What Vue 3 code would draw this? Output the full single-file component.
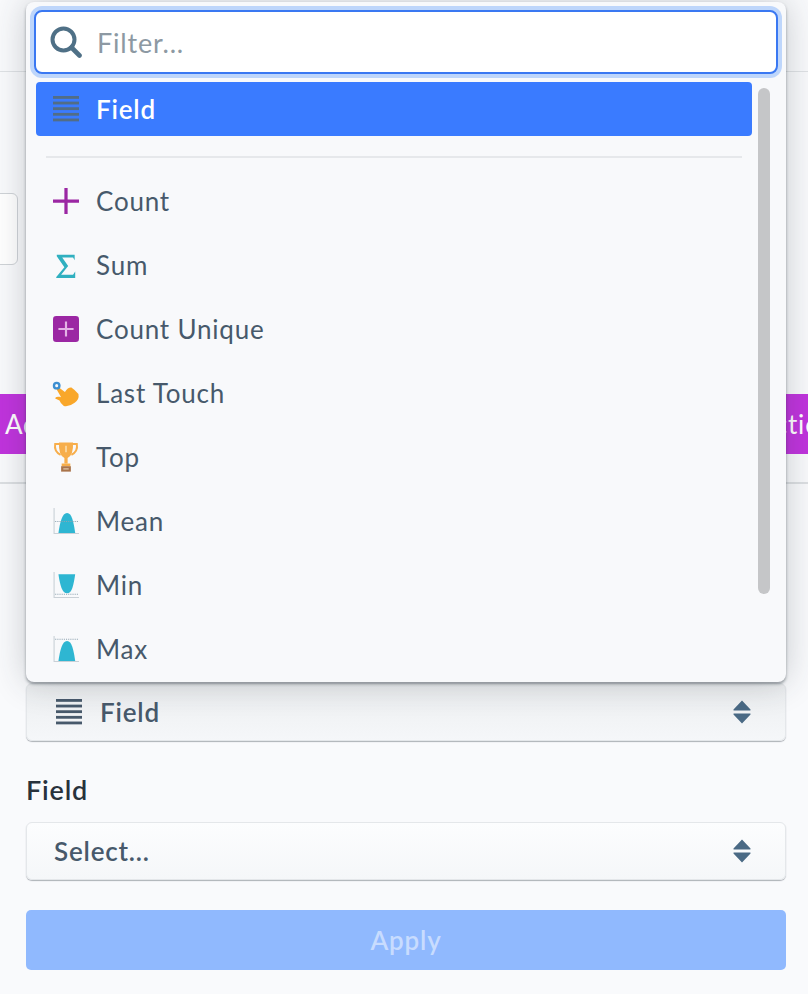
<template>
  <div class="page">
    <div class="top-bar"></div>
    <div class="name-box"></div>
    <div class="action-band">
      <span class="band-left">Add Function</span>
      <span class="band-right">Add Action</span>
    </div>
    <div class="band-line"></div>

    <div class="form">
      <button class="select select-type">
        <svg class="row-icon" viewBox="0 0 24 24">
          <rect v-for="y in barRows" :key="y" x="0" :y="y" width="24" height="2.6" fill="#47596b" />
        </svg>
        <span class="select-text">Field</span>
        <svg class="updown" viewBox="0 0 18 24">
          <path d="M9 0.5 17.5 9.5Q18 10.5 17 10.5H1Q0 10.5 .5 9.5ZM9 23.5 .5 14.5Q0 13.5 1 13.5H17Q18 13.5 17.5 14.5Z" fill="#4a6a85" />
        </svg>
      </button>

      <label class="field-label">Field</label>
      <button class="select select-field">
        <span class="select-text">Select...</span>
        <svg class="updown" viewBox="0 0 18 24">
          <path d="M9 0.5 17.5 9.5Q18 10.5 17 10.5H1Q0 10.5 .5 9.5ZM9 23.5 .5 14.5Q0 13.5 1 13.5H17Q18 13.5 17.5 14.5Z" fill="#4a6a85" />
        </svg>
      </button>

      <button class="apply">Apply</button>
    </div>

    <div class="menu">
      <div class="filter-box">
        <svg class="search-icon" viewBox="0 0 32 32">
          <circle cx="13.5" cy="13.5" r="11" fill="none" stroke="#4f7086" stroke-width="4" />
          <path d="M21.5 21.5 29.5 29.5" stroke="#4f7086" stroke-width="4.6" stroke-linecap="round" />
        </svg>
        <span class="filter-text">Filter...</span>
      </div>

      <div class="list">
        <div class="item item-active">
          <svg class="row-icon" viewBox="0 0 24 24">
            <rect v-for="y in barRows" :key="y" x="0" :y="y" width="24" height="2.6" fill="#526d86" />
          </svg>
          <span>Field</span>
        </div>
        <div class="divider"></div>

        <div v-for="item in items" :key="item.label" class="item">
          <svg class="row-icon" viewBox="0 0 24 24">
            <template v-if="item.icon === 'count'">
              <path d="M12 0V24M0 12H24" stroke="#9b27a3" stroke-width="3" fill="none" />
            </template>
            <template v-else-if="item.icon === 'sum'">
              <path d="M3.500 2.500H20V7.500L18.500 5H8.500L14 13 7.500 21H18.500L20.500 18V24H3V23L10.500 14 3.500 4Z" fill="#30b0c0" />
            </template>
            <template v-else-if="item.icon === 'unique'">
              <rect width="24" height="24" rx="3" fill="#9b27a3" />
              <path d="M12 5V19M5 12H19" stroke="#e3b3e6" stroke-width="2" fill="none" />
            </template>
            <template v-else-if="item.icon === 'touch'">
              <path d="M3 8 5.500 7 11 11Q14 6.500 17 7 20 9 23.500 13 24.500 18 20 21 15 25 10 24 7 22 6 19L2 17Q2 15 6 15.500L7.500 16Z" fill="#f9a72a" />
              <circle cx="3.400" cy="5.200" r="3.600" fill="#3d8fd1" />
              <circle cx="3.400" cy="5.200" r="1.400" fill="#f8f9fb" />
            </template>
            <template v-else-if="item.icon === 'top'">
              <path d="M6 0H2Q0.800 7 7 10M18 0H22Q23.200 7 17 10" fill="none" stroke="#f7ae4b" stroke-width="1.800" />
              <path d="M5.500 -1.500H18.500Q19 10 13.500 13V18H10.500V13Q5 10 5.500 -1.500Z" fill="#f7ae4b" />
              <path d="M8 18H16V20.500H8Z" fill="#f7ae4b" />
              <rect x="7.500" y="20.500" width="9" height="5" fill="#a9744a" />
              <rect x="9.500" y="22.500" width="5" height="1" fill="#e8d3b8" />
              <path d="M12 1.500V7.500" stroke="#fbdca9" stroke-width="1.500" />
            </template>
            <template v-else>
              <path d="M1 0V23.500H24" fill="none" stroke="#c9d0d6" stroke-width="1" />
              <path :d="curves[item.icon]" fill="#2eb6d2" />
              <path :d="dots[item.icon]" fill="none" stroke="#8fa3b0" stroke-width="1" stroke-dasharray="1 1" />
            </template>
          </svg>
          <span>{{ item.label }}</span>
        </div>
      </div>
      <div class="scroll-thumb"></div>
    </div>
  </div>
</template>

<script setup>
const barRows = [0, 5.2, 10.4, 15.6, 20.8]

const items = [
  { label: 'Count', icon: 'count' },
  { label: 'Sum', icon: 'sum' },
  { label: 'Count Unique', icon: 'unique' },
  { label: 'Last Touch', icon: 'touch' },
  { label: 'Top', icon: 'top' },
  { label: 'Mean', icon: 'mean' },
  { label: 'Min', icon: 'min' },
  { label: 'Max', icon: 'max' }
]

const curves = {
  mean: 'M5 23C6.500 13 8.500 4.500 13 4.500 17.500 4.500 19 13 20.500 23Z',
  min: 'M5 2C6.500 12 8.500 19.700 13 19.700 17.500 19.700 19 12 20.500 2Z',
  max: 'M5 23C6.500 13 8.500 4.500 13 4.500 17.500 4.500 19 13 20.500 23Z'
}

const dots = {
  mean: 'M2 12.500H23',
  min: 'M2 20.500H23',
  max: 'M2 3H23'
}
</script>

<style>
html,
body {
  margin: 0;
  background: #f9fafc;
}
</style>

<style scoped>
.page {
  position: relative;
  width: 808px;
  height: 994px;
  overflow: hidden;
  background: #f9fafc;
  font-family: "Lato", "Open Sans", sans-serif;
  letter-spacing: 0.8px;
  color: #47596b;
}

.top-bar {
  height: 71px;
  border-bottom: 1px solid #dfe2e5;
}

.name-box {
  width: 60px;
  height: 70px;
  margin: 121px 0 0 -44px;
  border: 1px solid #cfd3d7;
  border-radius: 6px;
  background: #fff;
}

.action-band {
  display: flex;
  justify-content: space-between;
  align-items: center;
  height: 60px;
  margin-top: 129px;
  background: #c034dd;
  color: #fff;
  font-size: 26px;
  white-space: nowrap;
}

.band-left {
  margin-left: 5px;
}

.band-right {
  margin-right: -28px;
}

.band-line {
  height: 2px;
  margin-top: 28px;
  background: #dcdfe2;
}

.form {
  display: flex;
  flex-direction: column;
  padding: 199px 22px 0 26px;
}

.select {
  display: flex;
  align-items: center;
  width: 760px;
  height: 58px;
  padding: 0 34px 0 27px;
  box-sizing: border-box;
  border: 1px solid #e4e7ea;
  border-radius: 6px;
  box-shadow: 0 1px 1px rgba(60, 70, 80, 0.4);
  background: linear-gradient(#fcfdfe, #f5f7f9);
  color: #47596b;
  font-family: inherit;
  font-size: 26px;
  font-weight: 600;
  letter-spacing: 0.8px;
}

.select-type {
  background: linear-gradient(#eceef0, #f5f7f9);
  padding-left: 29px;
}

.select-type .row-icon {
  margin-right: 18px;
}

.select-text {
  flex: 1;
  text-align: left;
}

.updown {
  width: 18px;
  height: 24px;
}

.field-label {
  margin: 33px 0 16px;
  color: #28323c;
  font-size: 27px;
  font-weight: 600;
  line-height: 32px;
}

.apply {
  height: 60px;
  margin-top: 30px;
  width: 760px;
  border: 0;
  border-radius: 5px;
  background: #90b9fe;
  color: #c8dcfe;
  font-family: inherit;
  font-size: 26px;
  font-weight: 600;
  letter-spacing: 0.8px;
}

.menu {
  position: absolute;
  top: 2px;
  left: 26px;
  width: 760px;
  height: 680px;
  border-radius: 8px;
  background: #f8f9fb;
  box-shadow: 0 2px 3px rgba(40, 50, 60, 0.45), 0 0 34px rgba(40, 50, 60, 0.24);
  overflow: hidden;
}

.filter-box {
  display: flex;
  align-items: center;
  height: 60px;
  margin: 8px 8px 0;
  padding-left: 14px;
  border: 2px solid #3a78f2;
  border-radius: 8px;
  background: #fff;
  box-shadow: 0 0 0 4px #bed6fb;
}

.search-icon {
  width: 32px;
  height: 32px;
  margin-right: 15px;
}

.filter-text {
  color: #8d99a3;
  font-size: 27px;
}

.list {
  display: flex;
  flex-direction: column;
  margin: 8px 34px 0 10px;
}

.item {
  display: flex;
  align-items: center;
  flex: none;
  height: 64px;
  padding-left: 17px;
  font-size: 26px;
}

.item-active {
  height: 54px;
  border-radius: 4px;
  background: #3a7bff;
  color: #fff;
  font-weight: 600;
}

.row-icon {
  flex: none;
  width: 26px;
  height: 26px;
  margin-right: 17px;
  overflow: visible;
}

.divider {
  height: 2px;
  margin: 20px 10px 11px;
  background: #e6e8eb;
}

.scroll-thumb {
  position: absolute;
  top: 86px;
  right: 16px;
  width: 12px;
  height: 506px;
  border-radius: 6px;
  background: #c5c6c8;
}
</style>
